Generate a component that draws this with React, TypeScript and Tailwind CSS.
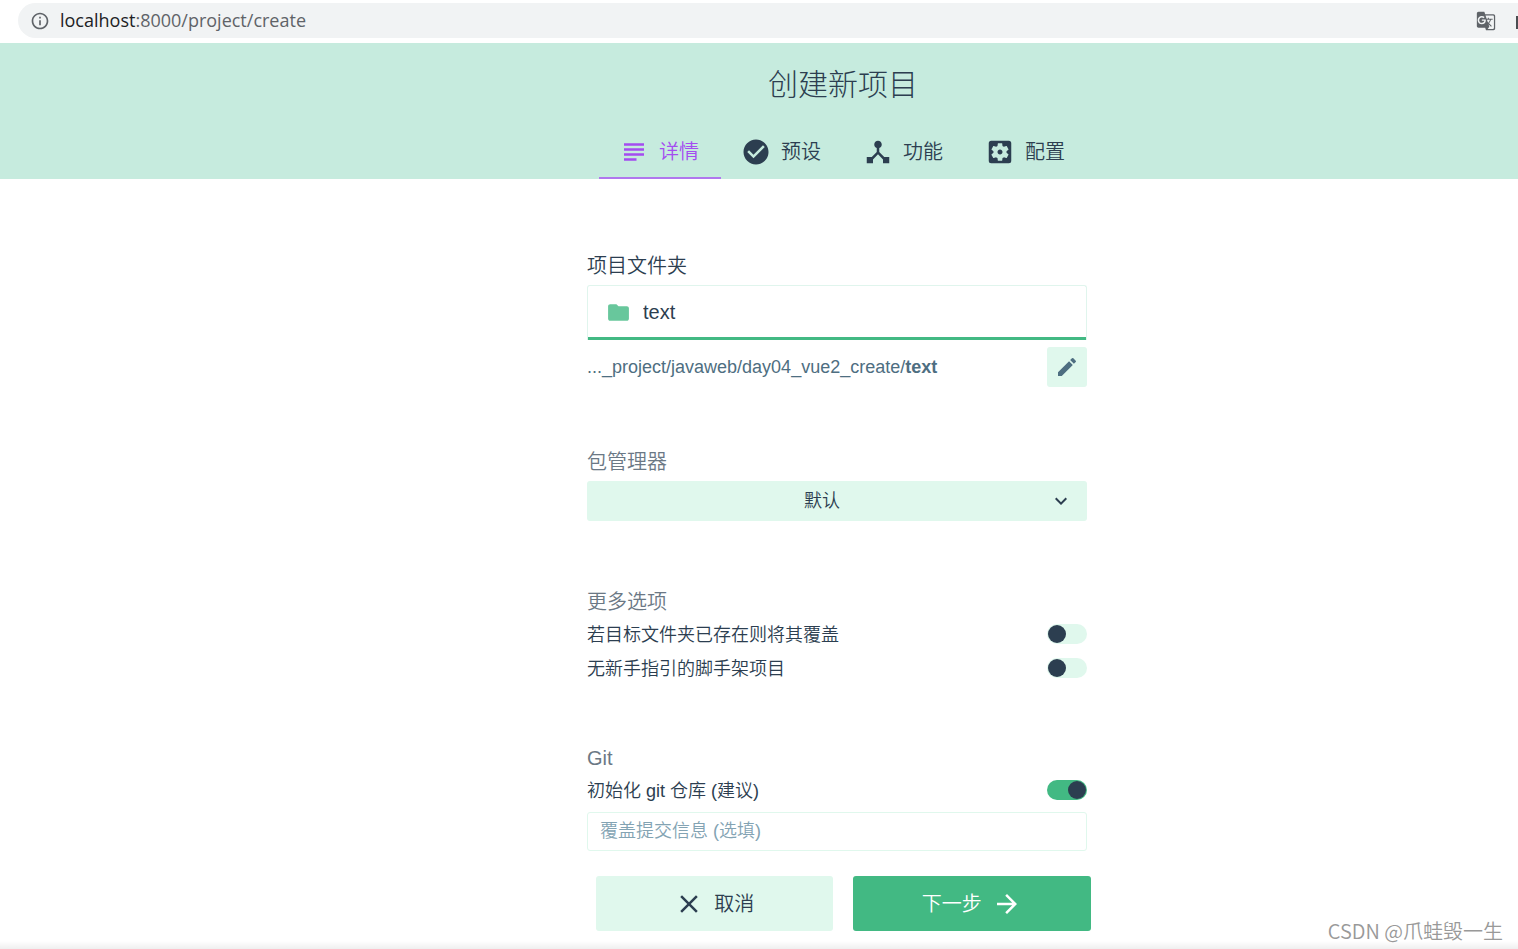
import React, { useState } from 'react';
import type { IconType } from 'react-icons';
import {
  MdArrowForward,
  MdCheckCircle,
  MdClose,
  MdDeviceHub,
  MdEdit,
  MdFolder,
  MdGTranslate,
  MdKeyboardArrowDown,
  MdOutlineInfo,
  MdSettingsApplications,
  MdSubject,
} from 'react-icons/md';

const tabs: { id: string; label: string; icon: IconType }[] = [
  { id: 'details', label: '详情', icon: MdSubject },
  { id: 'presets', label: '预设', icon: MdCheckCircle },
  { id: 'features', label: '功能', icon: MdDeviceHub },
  { id: 'config', label: '配置', icon: MdSettingsApplications },
];

const AddressBar: React.FC = () => (
  <div className="h-[43px] pt-[3px] pl-[18px] bg-white">
    <div className="flex items-center h-[35px] pl-3 rounded-l-full bg-[#f1f3f4] font-['Open_Sans','Noto_Sans',sans-serif] font-normal text-lg">
      <MdOutlineInfo size={20} className="text-[#5f6368]" />
      <span className="ml-2.5 pb-0.5 text-[#5f6368]">
        <span className="text-[#202124]">localhost</span>:8000/project/create
      </span>
      <MdGTranslate size={20} className="ml-auto text-[#5f6368]" />
      <span className="ml-5 mt-1 w-0.5 h-[13px] bg-[#4a4d51]" />
    </div>
  </div>
);

interface SwitchRowProps {
  id: string;
  label: string;
  checked: boolean;
  onChange: (value: boolean) => void;
}

const SwitchRow: React.FC<SwitchRowProps> = ({ id, label, checked, onChange }) => (
  <div className="flex items-center justify-between h-[34px]">
    <label htmlFor={id} className="pt-0.5 text-lg">{label}</label>
    <input
      id={id}
      type="checkbox"
      checked={checked}
      onChange={(e) => onChange(e.target.checked)}
      className="appearance-none flex items-center w-10 h-5 px-px rounded-full bg-[#e0f8ed] checked:bg-[#42b983] checked:justify-end before:block before:size-[18px] before:rounded-full before:bg-[#2c3e50]"
    />
  </div>
);

const App: React.FC = () => {
  const [tab, setTab] = useState('details');
  const [folder, setFolder] = useState('text');
  const [overwrite, setOverwrite] = useState(false);
  const [bare, setBare] = useState(false);
  const [git, setGit] = useState(true);

  return (
    <div className="relative min-h-screen bg-white text-[#2c3e50] font-[350] font-['Liberation_Sans','Noto_Sans_CJK_SC',sans-serif]">
      <AddressBar />

      <header className="flex flex-col items-center h-[136px] pl-[168px] bg-[#c6ebde]">
        <h1 className="mt-5 text-3xl leading-[44px] font-light">创建新项目</h1>
        <nav className="flex mt-auto">
          {tabs.map(({ id, label, icon: Icon }) => (
            <button
              key={id}
              type="button"
              onClick={() => setTab(id)}
              className={`flex items-center w-[122px] h-[54px] pt-0.5 pl-5 gap-2.5 text-xl border-b-2 ${
                tab === id ? 'text-[#a44cf0] border-[#b077ee]' : 'border-transparent'
              }`}
            >
              <Icon size={30} />
              {label}
            </button>
          ))}
        </nav>
      </header>

      <main className="pt-[72px] pl-[168px] pr-3">
        <form id="create" className="w-full max-w-[500px] mx-auto" onSubmit={(e) => e.preventDefault()}>
          <label htmlFor="folder" className="block mb-1 text-xl leading-[30px]">项目文件夹</label>
          <div className="flex items-center h-[55px] pb-0.5 pl-[18px] gap-3 rounded-t-[3px] border border-b-0 border-[#e0f5ed] shadow-[inset_0_-3px_0_#42b983]">
            <MdFolder size={25} className="text-[#68c79c]" />
            <input
              id="folder"
              value={folder}
              onChange={(e) => setFolder(e.target.value)}
              className="flex-1 h-full text-xl outline-none"
            />
          </div>
          <div className="flex items-center justify-between mt-[7px] text-[#4e6e81]">
            <span className="text-lg">
              ..._project/javaweb/day04_vue2_create/<b className="font-bold">{folder}</b>
            </span>
            <button type="button" aria-label="编辑" className="flex items-center justify-center size-10 rounded-[3px] bg-[#e0f8ed]">
              <MdEdit size={24} />
            </button>
          </div>

          <label htmlFor="manager" className="block mt-[60px] mb-1 text-xl leading-[30px] text-[#6b7885]">包管理器</label>
          <div className="relative">
            <select
              id="manager"
              className="block w-full h-10 pr-[30px] appearance-none rounded-[3px] bg-[#e0f8ed] text-lg [text-align-last:center]"
            >
              <option>默认</option>
            </select>
            <MdKeyboardArrowDown size={24} className="absolute right-3.5 top-2 pointer-events-none" />
          </div>

          <h2 className="mt-[66px] text-xl leading-[30px] font-[350] text-[#6b7885]">更多选项</h2>
          <SwitchRow id="overwrite" label="若目标文件夹已存在则将其覆盖" checked={overwrite} onChange={setOverwrite} />
          <SwitchRow id="bare" label="无新手指引的脚手架项目" checked={bare} onChange={setBare} />

          <h2 className="mt-[58px] text-xl leading-[30px] font-[350] text-[#6b7885]">Git</h2>
          <SwitchRow id="git" label="初始化 git 仓库 (建议)" checked={git} onChange={setGit} />
          <input
            aria-label="覆盖提交信息"
            placeholder="覆盖提交信息 (选填)"
            className="block w-full h-[39px] mt-[5px] px-3 rounded-[3px] border border-[#e0f8ed] text-lg outline-none placeholder:text-[#83a3b3]"
          />
        </form>
      </main>

      <footer className="pt-[25px] pb-[18px] pl-[168px]">
        <div className="flex gap-5 w-full max-w-[495px] mx-auto text-xl">
          <button type="button" className="flex flex-1 items-center justify-center gap-2.5 h-[55px] rounded-[3px] bg-[#e0f8ed]">
            <MdClose size={30} />
            取消
          </button>
          <button type="submit" form="create" className="flex flex-1 items-center justify-center gap-2.5 h-[55px] rounded-[3px] bg-[#42b983] text-white">
            下一步
            <MdArrowForward size={30} />
          </button>
        </div>
      </footer>

      <div className="absolute inset-x-0 bottom-0 h-2 bg-linear-to-b from-white to-[#efefef]" />
      <span className="absolute right-[15px] bottom-1 font-['Noto_Sans_CJK_SC',sans-serif] text-xl text-[#999]">
        CSDN @爪蛙毁一生
      </span>
    </div>
  );
};

export default App;
